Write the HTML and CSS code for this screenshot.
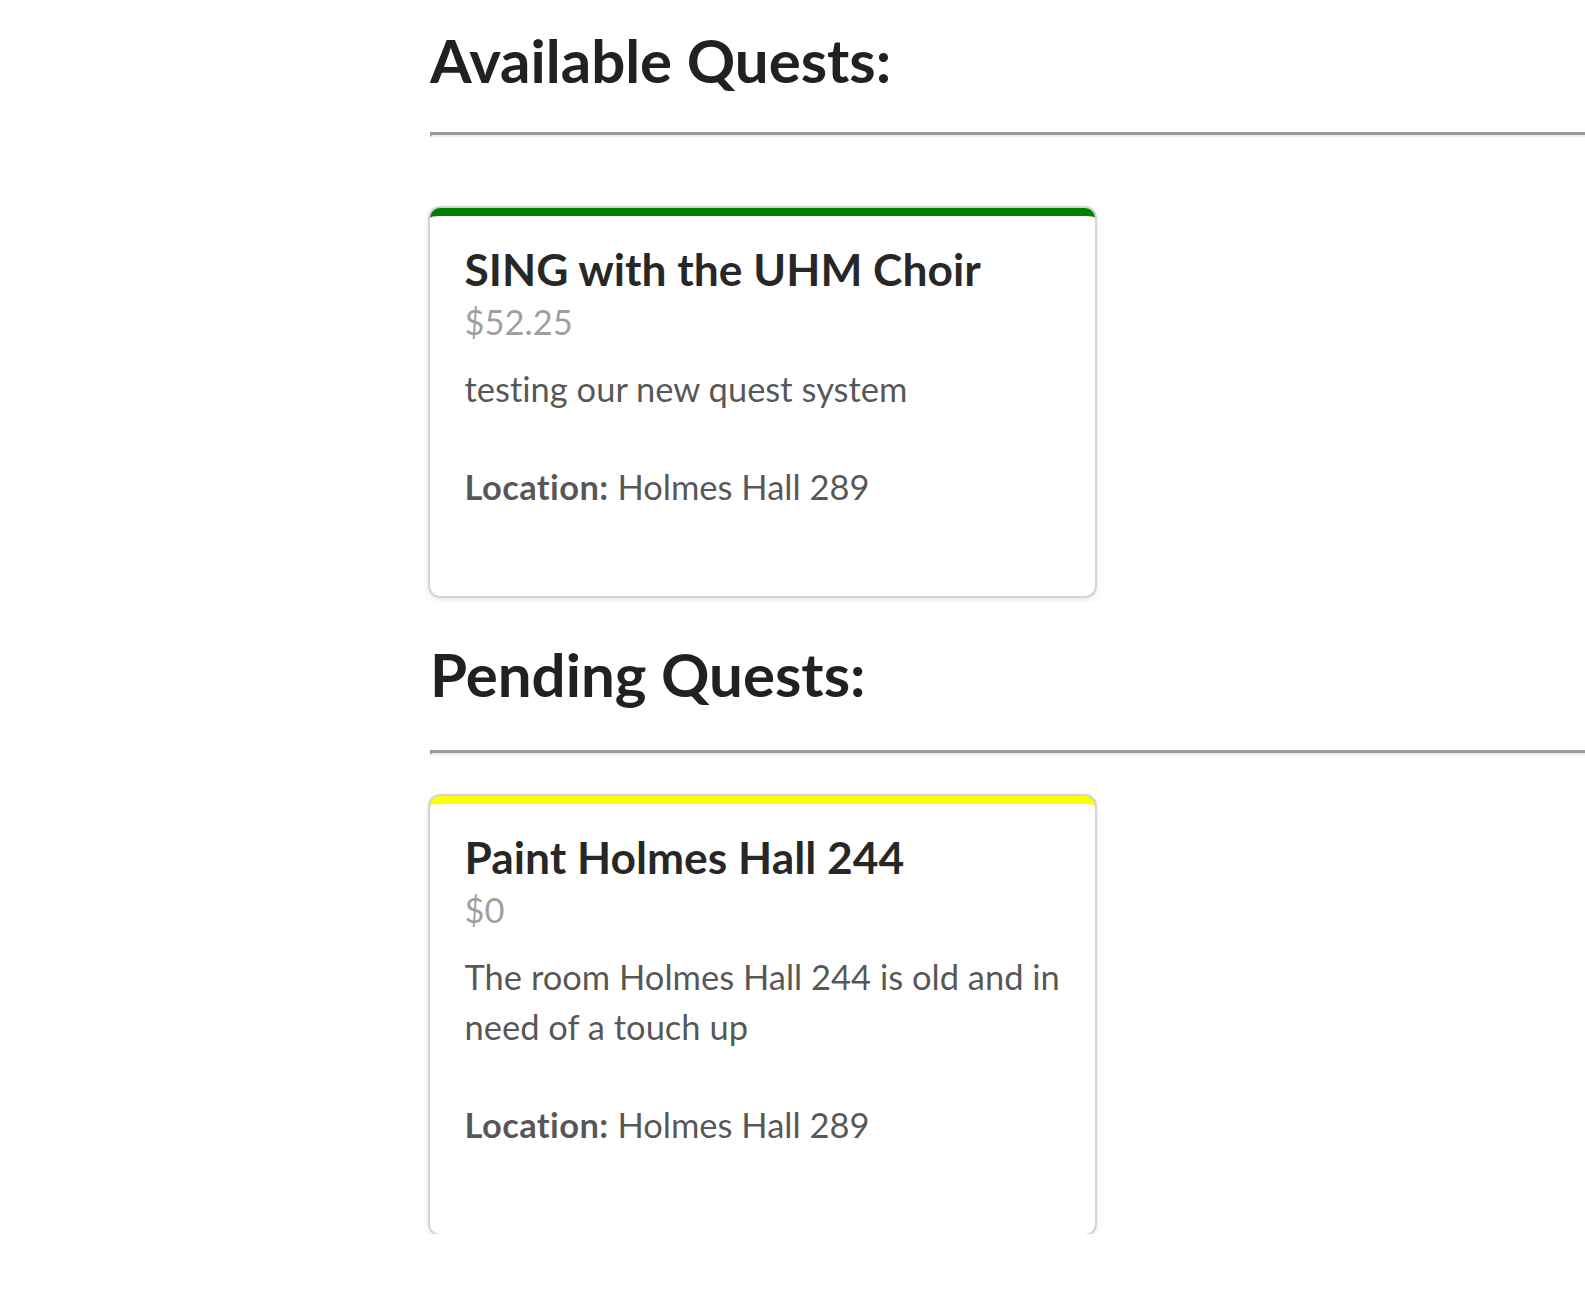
FILE: index.html
```html
<!DOCTYPE html>
<html lang="en">
<head>
<meta charset="utf-8">
<title>Quests</title>
<link rel="stylesheet" href="styles.css">
</head>
<body>
<div class="page">
  <section class="section section-available">
    <h1 class="section-title">Available Quests:</h1>
    <hr class="divider">
    <div class="cards">
      <div class="card card-green">
        <div class="content">
          <div class="header">SING with the UHM Choir</div>
          <div class="meta">$52.25</div>
          <div class="description">
            <p class="desc-text">testing our new quest system</p>
            <p class="location"><strong>Location:</strong> Holmes Hall 289</p>
          </div>
        </div>
      </div>
    </div>
  </section>
  <section class="section section-pending">
    <h1 class="section-title">Pending Quests:</h1>
    <hr class="divider">
    <div class="cards">
      <div class="card card-yellow">
        <div class="content">
          <div class="header">Paint Holmes Hall 244</div>
          <div class="meta">$0</div>
          <div class="description">
            <p class="desc-text">The room Holmes Hall 244 is old and in need of a touch up</p>
            <p class="location"><strong>Location:</strong> Holmes Hall 289</p>
          </div>
        </div>
      </div>
    </div>
  </section>
</div>
</body>
</html>
```

FILE: styles.css
```css
html, body {
  margin: 0;
  padding: 0;
  background: #ffffff;
}

body {
  font-family: Lato, "Open Sans", "Liberation Sans", sans-serif;
  font-size: 34.5px;
  line-height: 1.4285em;
  color: rgba(0, 0, 0, 0.87);
  font-variant-numeric: tabular-nums;
  font-variant-ligatures: no-common-ligatures;
  overflow: hidden;
}

.page {
  padding-left: 430px;
  padding-top: 21.6px;
}

.section-title {
  margin: 0;
  font-size: 60px;
  font-weight: 700;
  line-height: 77px;
  color: #212121;
}

.section-pending {
  margin-top: 39.9px;
}

.divider {
  display: block;
  height: 0;
  margin: 33.4px 0 0 0;
  border-style: solid;
  border-width: 3px 0 2px 2px;
  border-top-color: #9a9a9a;
  border-left-color: #9a9a9a;
  border-bottom-color: #eeeeee;
}

.section-pending .divider {
  margin-top: 36.5px;
}

.cards {
  margin-top: 70.7px;
}

.section-pending .cards {
  margin-top: 41.5px;
}

.card {
  width: 665px;
  box-sizing: border-box;
  background: #ffffff;
  border-radius: 10px;
  border-top: 8px solid transparent;
  box-shadow: 0 0 0 2px #d4d4d5, 0 2px 7px 0 #d4d4d5;
}

.card-green {
  border-top-color: #008000;
}

.card-yellow {
  border-top-color: #ffff00;
}

.content {
  padding: 34.5px 34.5px 85px 34.5px;
}

.header {
  font-size: 1.28571em;
  font-weight: 700;
  line-height: 1.28571em;
  margin-top: -10.6px;
  color: rgba(0, 0, 0, 0.85);
}

.meta {
  color: rgba(0, 0, 0, 0.4);
}

.description {
  margin-top: 17.75px;
  color: rgba(0, 0, 0, 0.68);
}

.desc-text {
  margin: 0;
}

.location {
  margin: 1.4285em 0 0 0;
}

.location strong {
  font-weight: 700;
  letter-spacing: 0.4px;
}
```
